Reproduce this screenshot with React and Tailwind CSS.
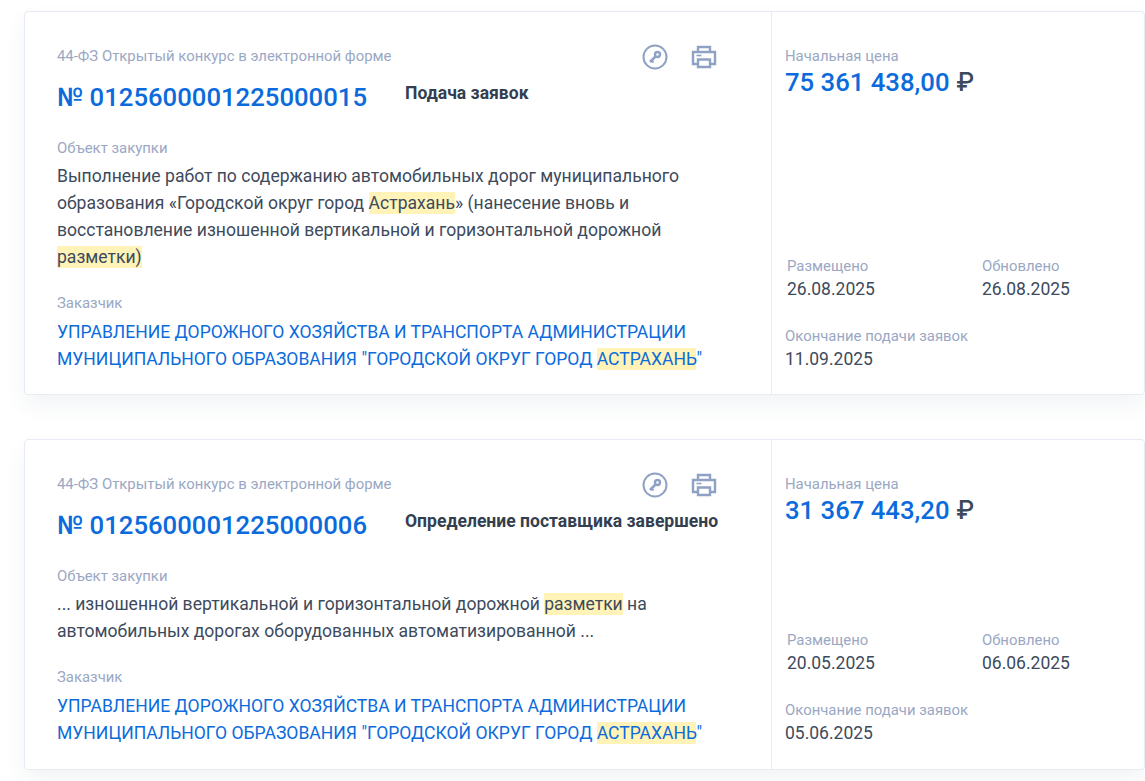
const font = { fontFamily: 'Roboto, sans-serif' };

function Mark({ children }) {
  return <span className="bg-[#fff3b8] py-[1px]">{children}</span>;
}

function KeyIcon() {
  return (
    <svg width="26" height="26" viewBox="0 0 26 26" fill="none" stroke="#8fa1c4" strokeWidth="2">
      <circle cx="13" cy="13" r="11.5" />
      <circle cx="15.5" cy="10.5" r="2.5" strokeWidth="2.4" />
      <path d="M13.6 12.4 8 18" strokeWidth="2.6" />
      <path d="M9.5 16.5l2 2" strokeWidth="2" />
    </svg>
  );
}

function PrintIcon() {
  return (
    <svg width="26" height="26" viewBox="0 0 26 26" fill="none" stroke="#8fa1c4" strokeWidth="2.4">
      <path d="M7 8V3h12v5" />
      <path d="M7 20H2V8h22v12h-5" />
      <path d="M7 15.5h12V23H7z" />
      <path d="M5.5 11.5h5" strokeWidth="1.6" />
    </svg>
  );
}

function Info({ label, value, className = '' }) {
  return (
    <div className={className}>
      <div className="text-[14.9px] leading-5 text-[#9aa8c4]">{label}</div>
      <div className="mt-[1px] text-[17.5px] leading-6 text-[#3d4a5c]">{value}</div>
    </div>
  );
}

function Card({ number, status, object, placed, updated, ends, price, height, spacer }) {
  return (
    <div className={`ml-6 flex ${height} rounded-[4px] border border-[#e8ebf4] bg-white shadow-[0_10px_22px_rgba(40,60,90,0.06)]`}>
      <div className="flex w-[747px] shrink-0 flex-col border-r border-[#e8ebf4] pl-8 pt-[34px]">
        <div className="flex h-5">
          <div className="w-[348px] shrink-0 text-[14.9px] leading-5 text-[#9aa8c4]">44-ФЗ Открытый конкурс в электронной форме</div>
          <div className="ml-[237px] mt-[-2px] flex h-[26px] gap-[23px]"><KeyIcon /><PrintIcon /></div>
        </div>
        <div className="mt-[15px] flex h-[35px]">
          <div className="w-[348px] shrink-0 text-[25.7px] font-medium leading-8 text-[#0b6bdc]">№ {number}</div>
          <div className="whitespace-nowrap text-[17.56px] font-bold leading-6 text-[#333f50]">{status}</div>
        </div>
        <div className="mt-[22px] text-[14.9px] leading-5 text-[#9aa8c4]">Объект закупки</div>
        <div className="mt-[5px] w-[660px] text-[17.56px] leading-[27px] text-[#3d4a5c]">{object}</div>
        <div className="mt-[22px] text-[14.9px] leading-5 text-[#9aa8c4]">Заказчик</div>
        <div className="mt-[6px] text-[17.56px] leading-[27px] text-[#0b6bdc]">
          УПРАВЛЕНИЕ ДОРОЖНОГО ХОЗЯЙСТВА И ТРАНСПОРТА АДМИНИСТРАЦИИ<br />
          МУНИЦИПАЛЬНОГО ОБРАЗОВАНИЯ "ГОРОДСКОЙ ОКРУГ ГОРОД <Mark>АСТРАХАНЬ</Mark>"
        </div>
      </div>
      <div className="flex flex-1 flex-col pl-[13px] pt-[34px]">
        <div className="text-[14.9px] leading-5 text-[#9aa8c4]">Начальная цена</div>
        <div className="text-[25.7px] font-medium leading-8 text-[#0b6bdc]">{price} <span className="text-[#3d4a5c]" style={{ fontFamily: 'Inter, sans-serif' }}>₽</span></div>
        <div className={spacer} />
        <div className="flex pl-[2px]">
          <Info label="Размещено" value={placed} className="w-[195px]" />
          <Info label="Обновлено" value={updated} />
        </div>
        <Info label="Окончание подачи заявок" value={ends} className="mt-[25px]" />
      </div>
    </div>
  );
}

export default function App() {
  return (
    <div className="h-[781px] w-[1145px] overflow-hidden bg-white pt-[11px]" style={font}>
      <Card
        number="0125600001225000015"
        status="Подача заявок"
        height="h-[384px]"
        spacer="h-[158px]"
        price="75 361 438,00"
        placed="26.08.2025"
        updated="26.08.2025"
        ends="11.09.2025"
        object={<>Выполнение работ по содержанию автомобильных дорог муниципального образования «Городской округ город <Mark>Астрахань</Mark>» (нанесение вновь и восстановление изношенной вертикальной и горизонтальной дорожной <Mark>разметки)</Mark></>}
      />
      <div className="h-[44px]" />
      <Card
        number="0125600001225000006"
        status="Определение поставщика завершено"
        height="h-[331px]"
        spacer="h-[104px]"
        price="31 367 443,20"
        placed="20.05.2025"
        updated="06.06.2025"
        ends="05.06.2025"
        object={<>... изношенной вертикальной и горизонтальной дорожной <Mark>разметки</Mark> на<br />автомобильных дорогах оборудованных автоматизированной ...</>}
      />
    </div>
  );
}
